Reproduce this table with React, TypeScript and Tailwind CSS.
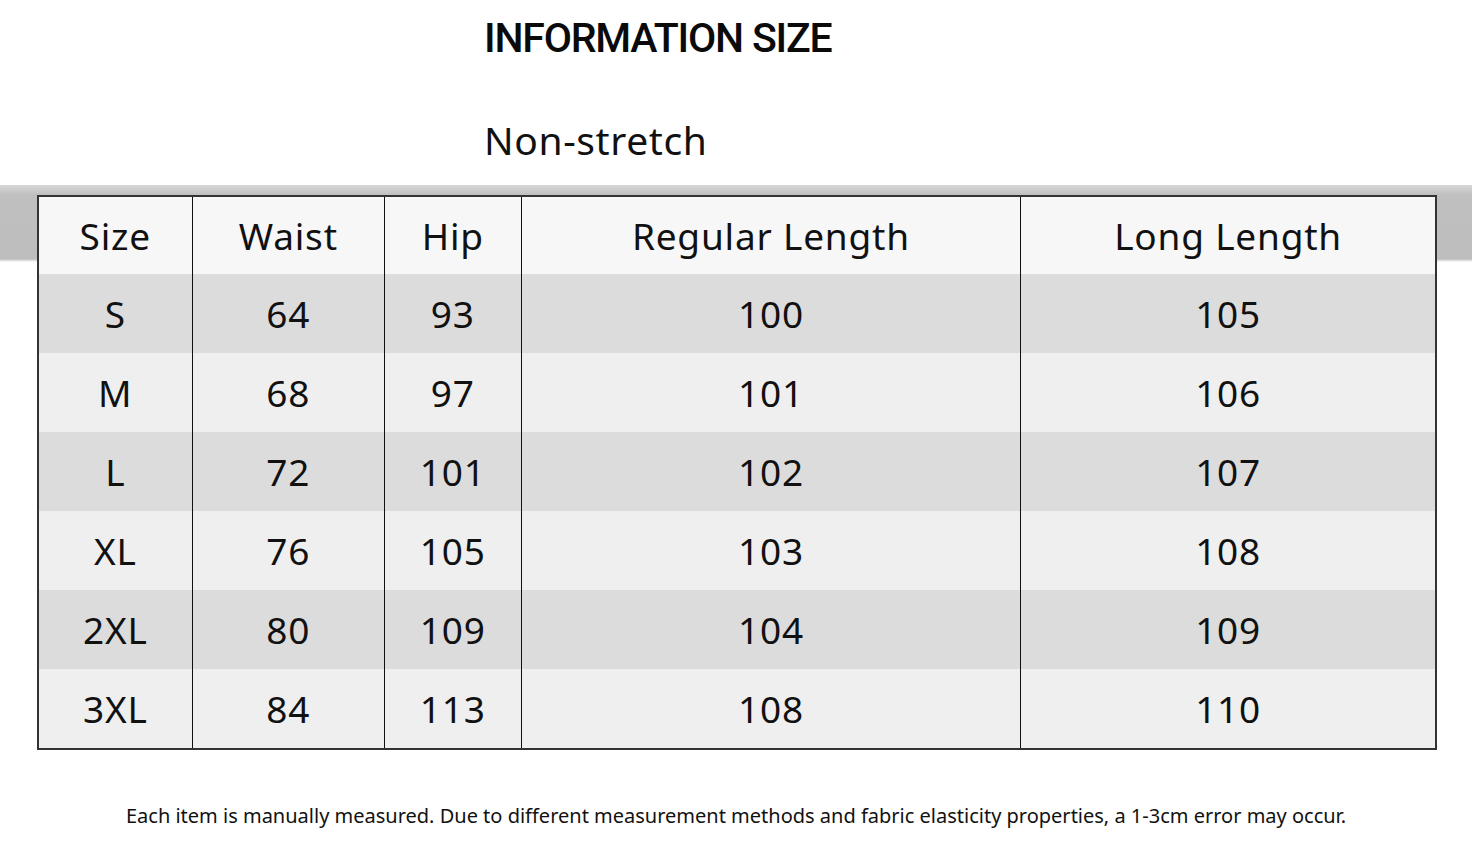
const COLUMNS = ["Size", "Waist", "Hip", "Regular Length", "Long Length"];

const ROWS: string[][] = [
  ["S", "64", "93", "100", "105"],
  ["M", "68", "97", "101", "106"],
  ["L", "72", "101", "102", "107"],
  ["XL", "76", "105", "103", "108"],
  ["2XL", "80", "109", "104", "109"],
  ["3XL", "84", "113", "108", "110"],
];

const WIDTHS = ["w-[153px]", "w-[193px]", "w-[137px]", "w-[501px]", "w-[416px]"];

function Cell({ text, idx }: { text: string; idx: number }) {
  return (
    <div
      className={`${WIDTHS[idx]} flex items-center justify-center ${idx > 0 ? "border-l border-[#111]" : ""}`}
    >
      {text}
    </div>
  );
}

export default function App() {
  return (
    <div className="w-[1472px] h-[864px] bg-white text-[#111] font-['Noto_Sans','Open_Sans',sans-serif] overflow-hidden">
      {/* ── Heading ── */}
      <div className="pl-[484px] pt-[14px]">
        <h1 className="font-['Roboto',sans-serif] font-medium text-[41px] leading-[48px] tracking-[-1.2px] text-[#0a0a0a]">
          INFORMATION SIZE
        </h1>
        <p className="mt-[54px] text-[39px] leading-[48px] tracking-[0.6px] text-[#111]">Non-stretch</p>
      </div>

      {/* ── Gray band + table ── */}
      <div className="mt-[21px] pt-[10px] bg-[linear-gradient(to_bottom,#d8d8d8_0px,#bfbfbf_10px,#bebebe_74px,#fff_77px)]">
        <div className="ml-[37px] w-[1400px] border-2 border-[#333] text-[37px] tracking-[0.8px]">
          <div className="flex h-[77px] bg-[#f7f7f7]">
            {COLUMNS.map((c, i) => (
              <Cell key={c} text={c} idx={i} />
            ))}
          </div>
          {ROWS.map((row, r) => (
            <div key={row[0]} className={`flex h-[79px] ${r % 2 === 0 ? "bg-[#dcdcdc]" : "bg-[#efefef]"}`}>
              {row.map((v, i) => (
                <Cell key={i} text={v} idx={i} />
              ))}
            </div>
          ))}
        </div>
      </div>

      {/* ── Footnote ── */}
      <p className="mt-[54px] text-center text-[20px] leading-[24px] text-[#111]">
        Each item is manually measured. Due to different measurement methods and fabric elasticity properties, a 1-3cm error may occur.
      </p>
    </div>
  );
}
